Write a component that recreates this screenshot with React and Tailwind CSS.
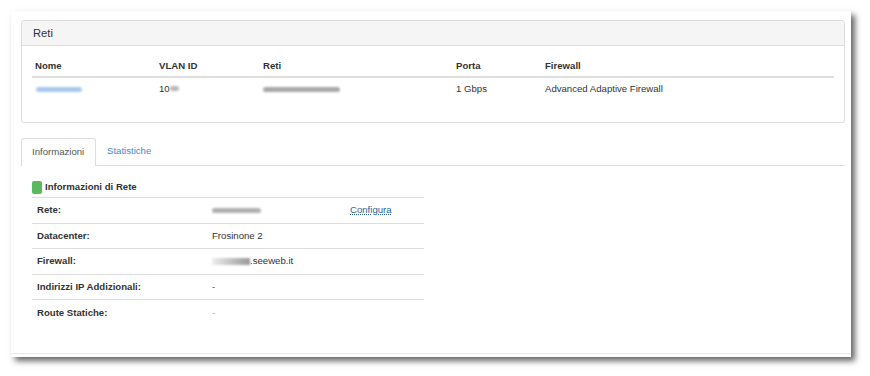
import React from 'react'

const font = { fontFamily: '"Liberation Sans", Arial, sans-serif' }

function Blur({ w, color = 'bg-[#a9a9a9]' }) {
    return <span className={`inline-block align-middle h-[5px] rounded-full blur-[1.2px] ${color}`} style={{ width: w }} />
}

function InfoRow({ label, children, link, last }) {
    return (
        <div className={`flex items-center h-[25.5px] ${last ? '' : 'border-b border-[#dddddd]'}`}>
            <div className="w-[175px] pl-[5px] font-bold text-[#333]">{label}</div>
            <div className="w-[138px] pl-[5px]">{children}</div>
            {link && <a className="pl-[5px] text-[#2a6496] underline decoration-dotted">{link}</a>}
        </div>
    )
}

export default function App() {
    return (
        <div className="w-[870px] h-[376px] bg-white pl-[11px] pt-[11px] text-[9.6px] text-[#333]" style={font}>
            <div className="w-[840px] h-[346px] bg-white shadow-[4px_4px_6px_rgba(0,0,0,0.6)] flex flex-col">
                <div className="flex-1 pl-[10px] pr-[6px] pt-[9px]">
                    <div className="border border-[#dddddd] rounded-[3px] h-[103px]">
                        <div className="h-[25px] bg-[#f5f5f5] border-b border-[#dddddd] flex items-center pl-[11px] text-[11.2px] text-[#333] rounded-t-[3px]">
                            Reti
                        </div>
                        <div className="px-[10px] pt-[10px]">
                            <div className="flex items-center h-[22px] border-b-2 border-[#dedede] font-bold">
                                <div className="w-[124px] pl-[3px]">Nome</div>
                                <div className="w-[104px] pl-[3px]">VLAN ID</div>
                                <div className="w-[193px] pl-[3px]">Reti</div>
                                <div className="w-[89px] pl-[3px]">Porta</div>
                                <div className="pl-[3px]">Firewall</div>
                            </div>
                            <div className="flex items-center h-[22px]">
                                <div className="w-[124px] pl-[4px]"><Blur w={46} color="bg-[#a8c8ee]" /></div>
                                <div className="w-[104px] pl-[3px] flex items-center">10<Blur w={9} color="bg-[#b8b8b8]" /></div>
                                <div className="w-[193px] pl-[3px]"><Blur w={77} color="bg-[#a8a8a8]" /></div>
                                <div className="w-[89px] pl-[3px]">1 Gbps</div>
                                <div className="pl-[3px]">Advanced Adaptive Firewall</div>
                            </div>
                        </div>
                    </div>

                    <div className="mt-[15px] flex border-b border-[#dddddd] h-[28px]">
                        <div className="w-[75px] border border-b-0 border-[#dddddd] rounded-t-[3px] bg-white -mb-px flex items-center pl-[10px] text-[#555]">
                            Informazioni
                        </div>
                        <div className="flex items-center pl-[11px] text-[#428bca]">Statistiche</div>
                    </div>

                    <div className="pl-[11px] w-[403px]">
                        <div className="flex items-center h-[30px] pt-[10px] mt-px">
                            <span className="inline-block w-[10px] h-[13px] bg-[#5cb85c] rounded-[2px] mr-[3px]" />
                            <span className="font-bold">Informazioni di Rete</span>
                        </div>
                        <div className="border-t border-[#dddddd]">
                            <InfoRow label="Rete:" link="Configura"><Blur w={49} color="bg-[#b0b0b0]" /></InfoRow>
                            <InfoRow label="Datacenter:">Frosinone 2</InfoRow>
                            <InfoRow label="Firewall:">
                                <span className="flex items-center">
                                    <span className="inline-block w-[38px] h-[7px] blur-[1px] bg-gradient-to-r from-[#eeeeee] to-[#999999]" />
                                    .seeweb.it
                                </span>
                            </InfoRow>
                            <InfoRow label="Indirizzi IP Addizionali:"><span className="text-[#555]">-</span></InfoRow>
                            <InfoRow label="Route Statiche:" last><span className="text-[#aaa]">-</span></InfoRow>
                        </div>
                    </div>
                </div>
                <div className="h-[4px] border-t border-[#e8e8e8]" />
            </div>
        </div>
    )
}
